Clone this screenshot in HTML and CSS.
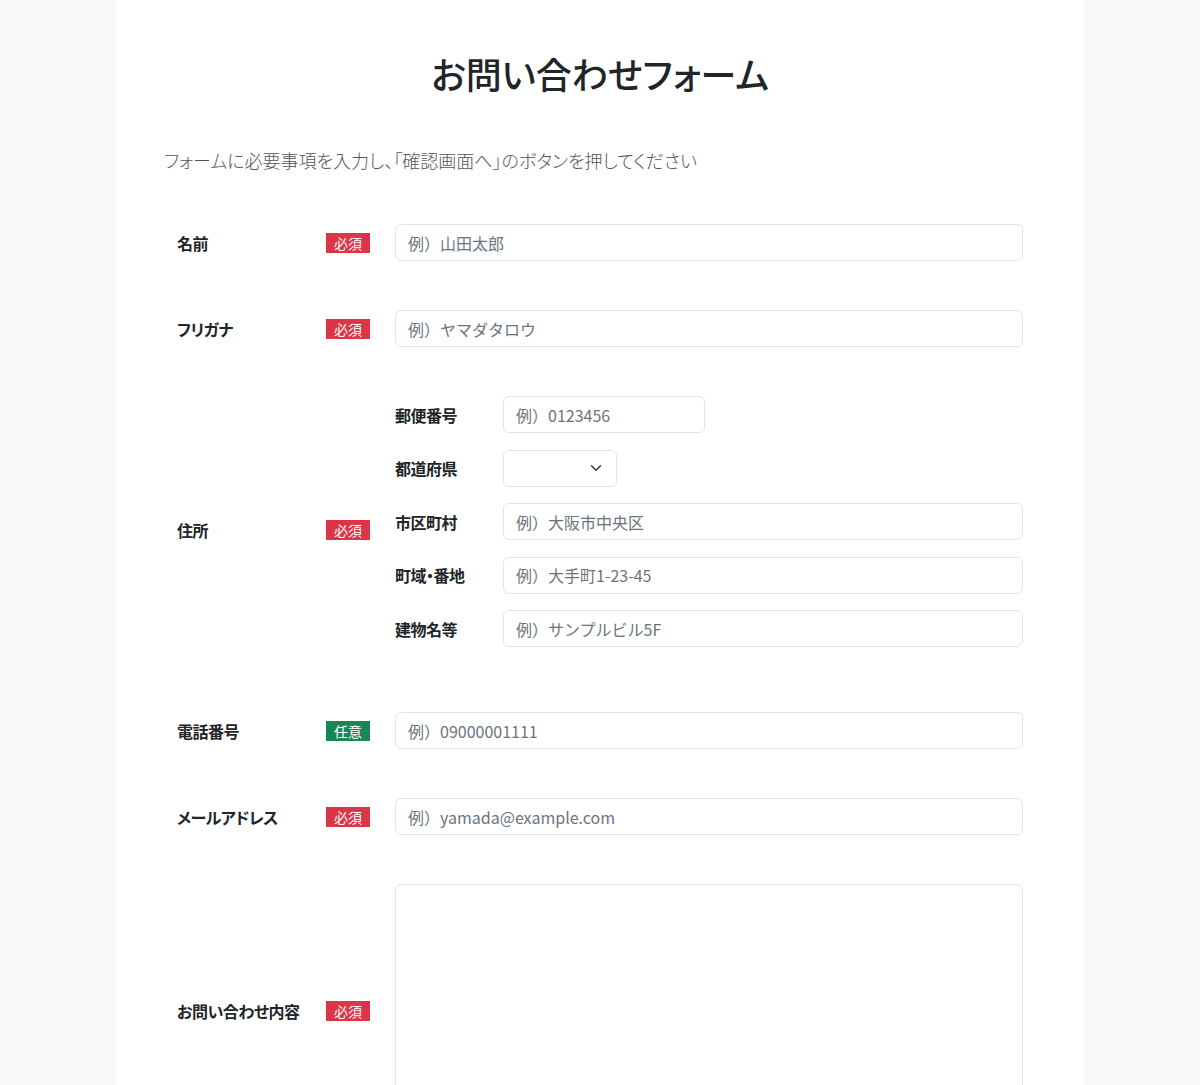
FILE: index.html
```html
<!DOCTYPE html>
<html lang="ja">
  <head>
    <meta charset="UTF-8" />
    <meta name="viewport" content="width=device-width, initial-scale=1.0" />
    <title>お問い合わせフォーム</title>
    <link rel="stylesheet" href="styles.css">
  </head>
  <body>
    <div class="page">
      <h1 class="title">お問い合わせフォーム</h1>
      <p class="lead">フォームに必要事項を入力し、「確認画面へ」のボタンを押してください</p>

      <form class="form">
        <div class="row">
          <div class="label-col">
            <span class="label">名前</span>
            <span class="badge req">必須</span>
          </div>
          <input class="field" type="text" placeholder="例）山田太郎">
        </div>

        <div class="row">
          <div class="label-col">
            <span class="label">フリガナ</span>
            <span class="badge req">必須</span>
          </div>
          <input class="field" type="text" placeholder="例）ヤマダタロウ">
        </div>

        <div class="row">
          <div class="label-col">
            <span class="label">住所</span>
            <span class="badge req">必須</span>
          </div>
          <div class="address">
            <div class="sub-row">
              <span class="label">郵便番号</span>
              <input class="field zip" type="text" placeholder="例）0123456">
            </div>
            <div class="sub-row">
              <span class="label">都道府県</span>
              <div class="select">
                <svg width="12" height="12" viewBox="0 0 16 16"><path d="M2 5l6 6 6-6" fill="none" stroke="#343a40" stroke-width="2" stroke-linecap="round" stroke-linejoin="round"/></svg>
              </div>
            </div>
            <div class="sub-row">
              <span class="label">市区町村</span>
              <input class="field" type="text" placeholder="例）大阪市中央区">
            </div>
            <div class="sub-row">
              <span class="label">町域・番地</span>
              <input class="field" type="text" placeholder="例）大手町1-23-45">
            </div>
            <div class="sub-row">
              <span class="label">建物名等</span>
              <input class="field" type="text" placeholder="例）サンプルビル5F">
            </div>
          </div>
        </div>

        <div class="row">
          <div class="label-col">
            <span class="label">電話番号</span>
            <span class="badge opt">任意</span>
          </div>
          <input class="field" type="text" placeholder="例）09000001111">
        </div>

        <div class="row">
          <div class="label-col">
            <span class="label">メールアドレス</span>
            <span class="badge req">必須</span>
          </div>
          <input class="field" type="text" placeholder="例）yamada@example.com">
        </div>

        <div class="row">
          <div class="label-col">
            <span class="label">お問い合わせ内容</span>
            <span class="badge req">必須</span>
          </div>
          <textarea class="field message"></textarea>
        </div>
      </form>
    </div>
  </body>
</html>
```

FILE: styles.css
```css
html, body {
  margin: 0;
  padding: 0;
}
body {
  background-color: #f8f9fa;
  font-family: "Noto Sans CJK JP", "Noto Sans", sans-serif;
  color: #212529;
}
.page {
  width: 872px;
  margin: 0 auto;
  padding: 49px 48px 40px;
  background-color: #fff;
  min-height: 1100px;
}
.title {
  margin: 0;
  text-align: center;
  font-size: 36px;
  font-weight: 500;
  line-height: 48px;
  font-feature-settings: "palt";
}
.lead {
  margin: 49px 0 0;
  font-size: 18px;
  line-height: 28px;
  font-weight: 300;
  color: #555;
  font-feature-settings: "palt";
}

.form {
  margin-top: 50px;
  padding: 0 13px;
}
.row {
  display: grid;
  grid-template-columns: 193px 1fr;
  column-gap: 25px;
  align-items: center;
  margin-bottom: 49px;
}
.label-col {
  display: flex;
  justify-content: space-between;
  align-items: center;
}
.label {
  font-size: 16px;
  font-weight: 700;
  letter-spacing: -0.5px;
  font-feature-settings: "palt";
}
.badge {
  width: 44px;
  height: 20px;
  line-height: 20px;
  text-align: center;
  font-size: 14px;
  color: #fff;
}
.req {
  background-color: #dc3545;
}
.opt {
  background-color: #198754;
}

.field {
  box-sizing: border-box;
  height: 37px;
  width: 100%;
  padding: 6px 12px;
  border: 1px solid #e3e5e8;
  border-radius: 6px;
  background-color: #fff;
  font-family: inherit;
  font-size: 16px;
  color: #212529;
}
.field::placeholder {
  color: #6c757d;
}

.address {
  padding-bottom: 16px;
}
.sub-row {
  display: grid;
  grid-template-columns: 108px 1fr;
  align-items: center;
  margin-bottom: 16.5px;
}
.sub-row:last-child {
  margin-bottom: 0;
}
.zip {
  width: 202px;
}
.select {
  box-sizing: border-box;
  width: 114px;
  height: 37px;
  border: 1px solid #e3e5e8;
  border-radius: 6px;
  display: flex;
  justify-content: flex-end;
  align-items: center;
  padding-right: 14px;
}
.message {
  height: 254px;
  resize: none;
}
```
